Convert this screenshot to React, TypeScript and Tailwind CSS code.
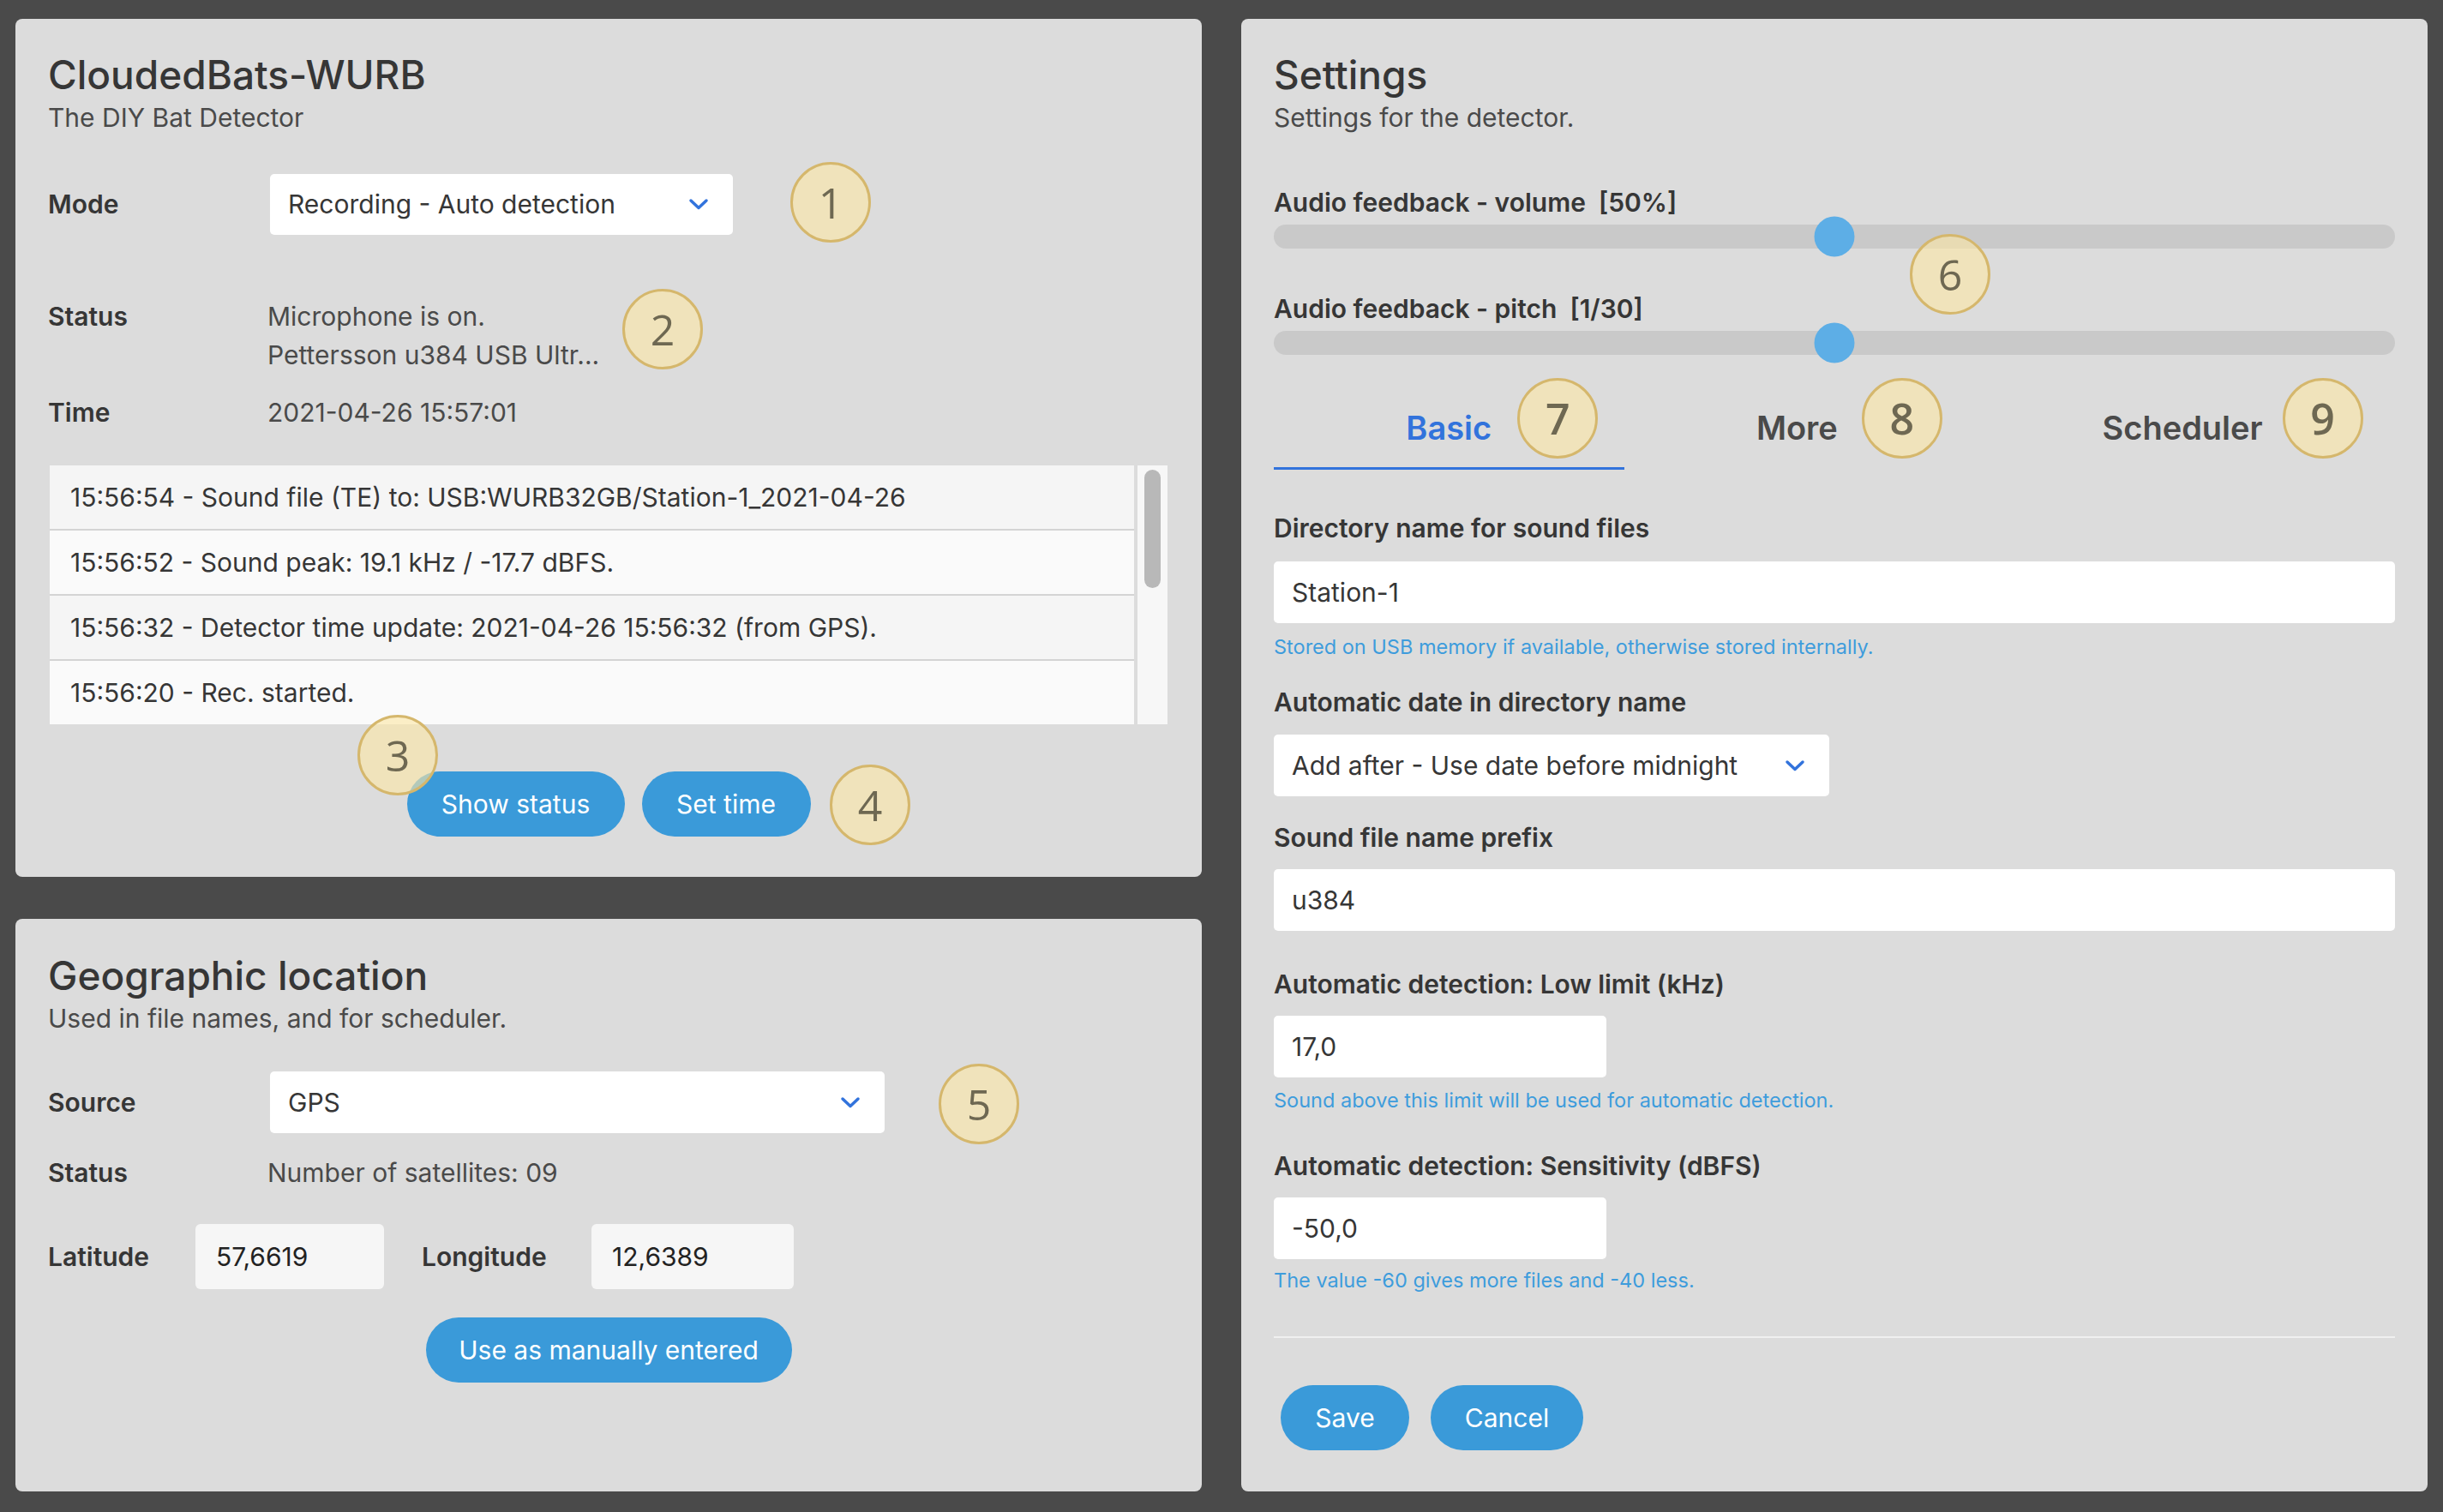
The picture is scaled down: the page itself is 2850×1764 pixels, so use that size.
import React from 'react';

const FONT = "font-['Inter','Liberation_Sans',sans-serif]";

const logRows = [
  '15:56:54 - Sound file (TE) to: USB:WURB32GB/Station-1_2021-04-26',
  '15:56:52 - Sound peak: 19.1 kHz / -17.7 dBFS.',
  '15:56:32 - Detector time update: 2021-04-26 15:56:32 (from GPS).',
  '15:56:20 - Rec. started.',
];

const Badge: React.FC<{ n: number; className?: string }> = ({ n, className = '' }) => (
  <div
    className={`pointer-events-none absolute w-[94px] h-[94px] rounded-full border-[3px] border-[#d5b76c] bg-[rgba(252,230,166,0.62)] flex items-center justify-center text-[50px] leading-none text-[#6e6852] font-['Open_Sans',sans-serif] ${className}`}
  >
    {n}
  </div>
);

const Chevron = () => (
  <svg width="24" height="15" viewBox="0 0 24 15">
    <polyline points="3,3 12,11.5 21,3" fill="none" stroke="#3273dc" strokeWidth="3.5" strokeLinecap="round" strokeLinejoin="round" />
  </svg>
);

const Select: React.FC<{ value: string; className?: string }> = ({ value, className = '' }) => (
  <div className={`flex items-center justify-between bg-white rounded-[5px] pl-[21px] pr-[28px] text-[30px] leading-[45px] text-[#363636] ${className}`}>
    <span>{value}</span>
    <Chevron />
  </div>
);

const Label: React.FC<{ children: React.ReactNode; className?: string }> = ({ children, className = '' }) => (
  <div className={`text-[30px] leading-[45px] font-semibold text-[#363636] ${className}`}>{children}</div>
);

const Button: React.FC<{ children: React.ReactNode; className?: string }> = ({ children, className = '' }) => (
  <button className={`h-[76px] rounded-full bg-[#3a9ad9] text-white text-[30px] leading-[45px] text-center ${className}`}>
    {children}
  </button>
);

const PanelHead: React.FC<{ title: string; sub: string }> = ({ title, sub }) => (
  <>
    <h1 className="text-[46px] leading-[56px] font-medium text-[#363636]">{title}</h1>
    <p className="text-[30px] leading-[45px] text-[#4a4a4a]">{sub}</p>
  </>
);

const DetectorPanel = () => (
  <div className="relative bg-[#dcdcdc] rounded-[8px] px-[38px] pt-[37px] pb-[47px]">
    <PanelHead title="CloudedBats-WURB" sub="The DIY Bat Detector" />

    <div className="mt-[43px] flex items-center">
      <Label className="w-[259px]">Mode</Label>
      <Select value="Recording - Auto detection" className="w-[540px] h-[71px]" />
    </div>

    <div className="mt-[73px] flex items-start">
      <Label className="w-[256px]">Status</Label>
      <div className="text-[30px] leading-[45px] text-[#4a4a4a]">
        <div>Microphone is on.</div>
        <div>Pettersson u384 USB Ultr...</div>
      </div>
    </div>

    <div className="mt-[22px] flex items-start">
      <Label className="w-[256px]">Time</Label>
      <div className="text-[30px] leading-[45px] text-[#4a4a4a]">2021-04-26 15:57:01</div>
    </div>

    <div className="mt-[39px] mx-[2px] flex h-[302px]">
      <div className="flex-1 flex flex-col gap-[2px] bg-[#d4d4d4] overflow-hidden">
        {logRows.map((row, i) => (
          <div
            key={i}
            className={`h-[74px] shrink-0 flex items-center pl-[24px] text-[30px] text-[#363636] ${i % 2 === 0 ? 'bg-[#f5f5f5]' : 'bg-[#fafafa]'}`}
          >
            {row}
          </div>
        ))}
      </div>
      <div className="w-[35px] ml-[4px] bg-[#f7f7f7] pt-[5px] px-[8px]">
        <div className="h-[138px] rounded-full bg-[#b8b8b8]" />
      </div>
    </div>

    <div className="mt-[55px] flex justify-center gap-[20px]">
      <Button className="w-[254px]">Show status</Button>
      <Button className="w-[197px]">Set time</Button>
    </div>

    <Badge n={1} className="left-[904px] top-[167px]" />
    <Badge n={2} className="left-[708px] top-[315px]" />
    <Badge n={3} className="left-[399px] top-[812px]" />
    <Badge n={4} className="left-[950px] top-[870px]" />
  </div>
);

const LocationPanel = () => (
  <div className="relative flex-1 bg-[#dcdcdc] rounded-[8px] px-[38px] pt-[38px]">
    <PanelHead title="Geographic location" sub="Used in file names, and for scheduler." />

    <div className="mt-[39px] flex items-center">
      <Label className="w-[259px]">Source</Label>
      <Select value="GPS" className="w-[717px] h-[72px]" />
    </div>

    <div className="mt-[24px] flex items-start">
      <Label className="w-[256px]">Status</Label>
      <div className="text-[30px] leading-[45px] text-[#4a4a4a]">Number of satellites: 09</div>
    </div>

    <div className="mt-[37px] flex items-center">
      <Label className="w-[172px]">Latitude</Label>
      <div className="w-[220px] h-[76px] rounded-[6px] bg-[#f6f6f6] flex items-center pl-[24px] text-[30px] text-[#222]">57,6619</div>
      <Label className="ml-[44px] w-[198px]">Longitude</Label>
      <div className="w-[236px] h-[76px] rounded-[6px] bg-[#f6f6f6] flex items-center pl-[24px] text-[30px] text-[#222]">12,6389</div>
    </div>

    <div className="mt-[33px] flex justify-center">
      <Button className="w-[427px]">Use as manually entered</Button>
    </div>

    <Badge n={5} className="left-[1077px] top-[169px]" />
  </div>
);

const Slider: React.FC<{ pct: number }> = ({ pct }) => (
  <div className="relative h-[40px] flex items-center">
    <div className="w-full h-[28px] rounded-full bg-[#c9c9c9]" />
    <div
      className="absolute top-1/2 w-[47px] h-[47px] -translate-x-1/2 -translate-y-1/2 rounded-full bg-[#5daee6]"
      style={{ left: `${pct}%` }}
    />
  </div>
);

const Tab: React.FC<{ label: string; n: number; active?: boolean; gap: string }> = ({ label, n, active, gap }) => (
  <div
    className={`flex-auto text-center pb-[22px] border-b-[3px] text-[38px] leading-[48px] font-semibold ${active ? 'border-[#3273dc] text-[#3273dc]' : 'border-transparent text-[#4a4a4a]'}`}
  >
    <span className="relative">
      {label}
      <Badge n={n} className={`top-[-35px] ${gap}`} />
    </span>
  </div>
);

const Field: React.FC<{ label: string; className?: string; children: React.ReactNode }> = ({ label, className = '', children }) => (
  <div className={className}>
    <Label>{label}</Label>
    {children}
  </div>
);

const Input: React.FC<{ value: string; className?: string }> = ({ value, className = '' }) => (
  <div className={`h-[72px] bg-white rounded-[5px] flex items-center pl-[21px] text-[30px] text-[#363636] ${className}`}>{value}</div>
);

const Help: React.FC<{ children: React.ReactNode; className?: string }> = ({ children, className = '' }) => (
  <p className={`text-[23.5px] leading-[33px] text-[#3e9cdc] ${className}`}>{children}</p>
);

const SettingsPanel = () => (
  <div className="relative bg-[#dcdcdc] rounded-[8px] px-[38px] pt-[37px] pb-[48px]">
    <PanelHead title="Settings" sub="Settings for the detector." />

    <div className="mt-[56px] text-[30px] leading-[40px] font-semibold whitespace-pre">Audio feedback - volume  [50%]</div>
    <Slider pct={50} />
    <div className="mt-[44px] text-[30px] leading-[40px] font-semibold whitespace-pre">Audio feedback - pitch  [1/30]</div>
    <Slider pct={50} />

    <div className="mt-[55px] flex">
      <Tab label="Basic" n={7} active gap="left-[calc(100%+30px)]" />
      <Tab label="More" n={8} gap="left-[calc(100%+28px)]" />
      <Tab label="Scheduler" n={9} gap="left-[calc(100%+23px)]" />
    </div>

    <Field label="Directory name for sound files" className="mt-[46px]">
      <Input value="Station-1" className="mt-[16px] w-full" />
      <Help className="mt-[11px]">Stored on USB memory if available, otherwise stored internally.</Help>
    </Field>

    <Field label="Automatic date in directory name" className="mt-[26px]">
      <Select value="Add after - Use date before midnight" className="mt-[15px] w-[648px] h-[72px]" />
    </Field>

    <Field label="Sound file name prefix" className="mt-[26px]">
      <Input value="u384" className="mt-[14px] w-full" />
    </Field>

    <Field label="Automatic detection: Low limit (kHz)" className="mt-[40px]">
      <Input value="17,0" className="mt-[14px] w-[388px]" />
      <Help className="mt-[10px]">Sound above this limit will be used for automatic detection.</Help>
    </Field>

    <Field label="Automatic detection: Sensitivity (dBFS)" className="mt-[38px]">
      <Input value="-50,0" className="mt-[14px] w-[388px]" />
      <Help className="mt-[8px]">The value -60 gives more files and -40 less.</Help>
    </Field>

    <div className="mt-[49px] h-[2px] bg-[#f0f0f0]" />

    <div className="mt-[55px] pl-[8px] flex gap-[25px]">
      <Button className="w-[150px]">Save</Button>
      <Button className="w-[178px]">Cancel</Button>
    </div>

    <Badge n={6} className="left-[780px] top-[251px]" />
  </div>
);

const App: React.FC = () => {
  return (
    <div className={`min-h-screen bg-[#4a4a4a] pt-[22px] pb-[23px] px-[18px] ${FONT} text-[#363636]`}>
      <div className="grid grid-cols-2 gap-x-[46px]">
        <div className="flex flex-col gap-[49px]">
          <DetectorPanel />
          <LocationPanel />
        </div>
        <SettingsPanel />
      </div>
    </div>
  );
};

export default App;
